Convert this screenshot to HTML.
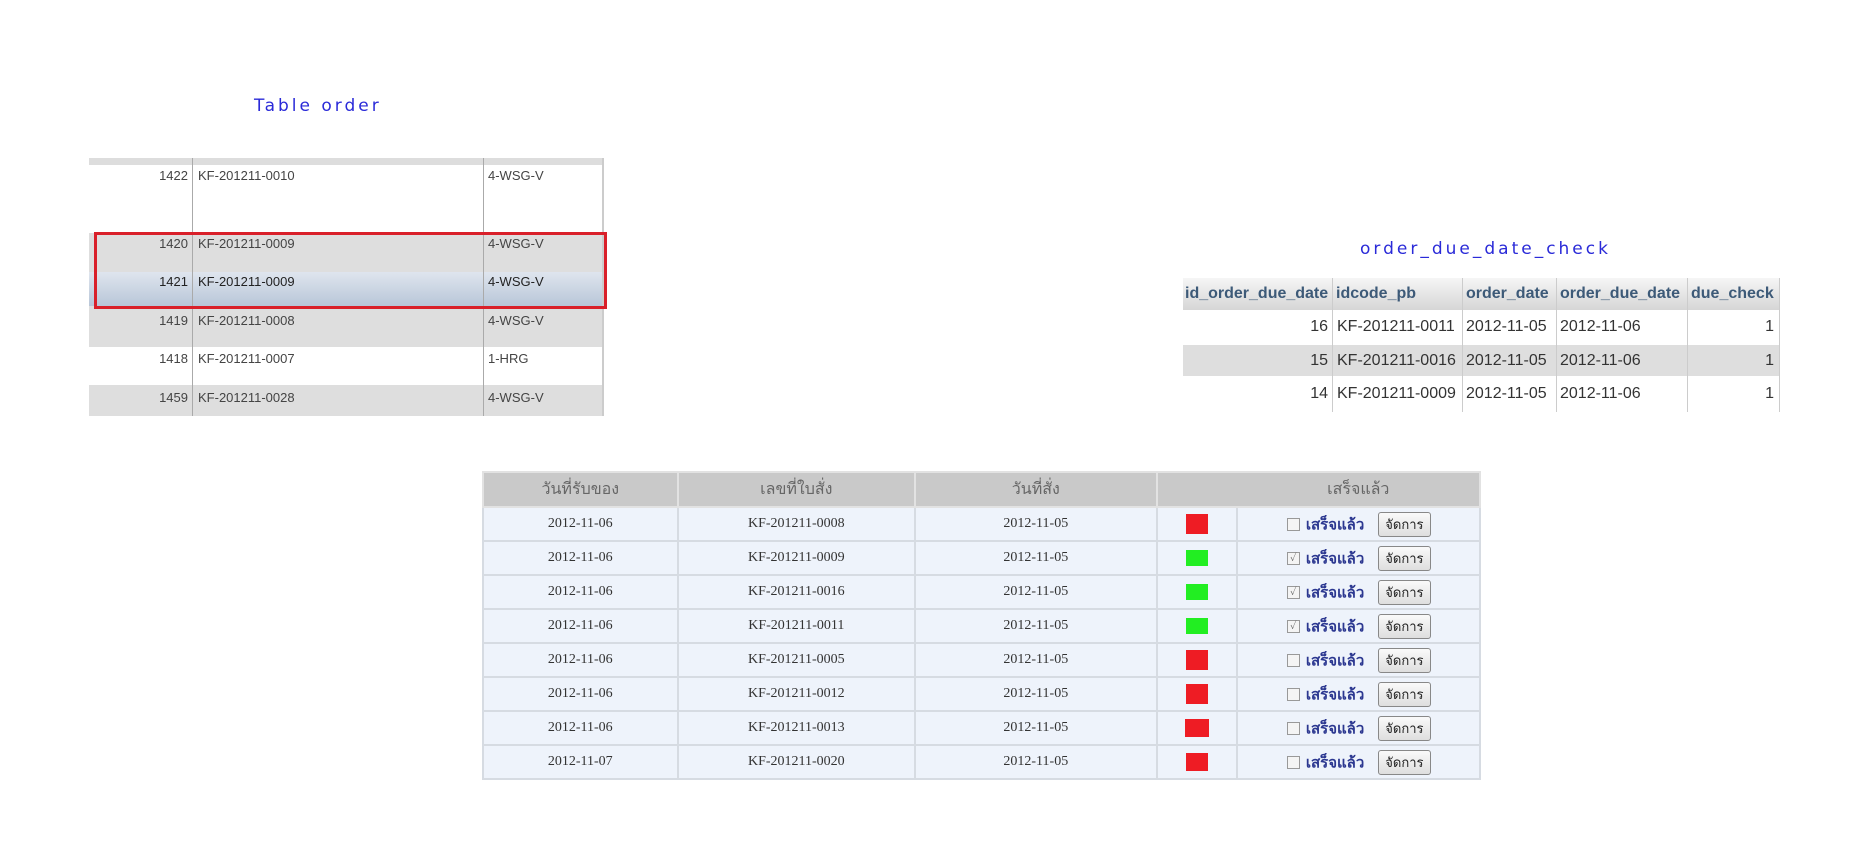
<!DOCTYPE html>
<html><head><meta charset="utf-8"><style>
body{margin:0;width:1854px;height:859px;background:#fff;position:relative;overflow:hidden;font-family:"Liberation Sans",Arial,sans-serif}
.abs{position:absolute}
.title{color:#2a2ad8;font-size:17px;letter-spacing:3px;font-family:"DejaVu Sans","Liberation Sans",sans-serif}
.lt div{position:absolute;font-size:13px;color:#444}
.rt{position:absolute;font-size:16px;color:#333}
.bt{position:absolute;border-collapse:collapse;font-family:"Liberation Serif","Noto Serif CJK SC",serif;font-size:14px;color:#333}
.bt td,.bt th{border:2px solid #d6dbe2;text-align:center;padding:0;height:32px}
.bt th{background:#c9c9c9;color:#666;font-weight:normal;font-size:16px;height:33px;border-color:#e2e2e2}
.bt td{background:#eef3fb}
.sq{display:inline-block;width:22px;height:20px;vertical-align:middle}
.cb{display:inline-block;width:11px;height:11px;border:1px solid #999;background:#f4f4f4;vertical-align:middle;font-size:10px;line-height:11px;color:#555;margin-right:6px}
.dn{color:#2b3790;font-weight:bold;font-family:"Liberation Sans","Noto Sans CJK SC",sans-serif;font-size:15px;vertical-align:middle}
.btn{display:inline-block;border:1px solid #888;border-radius:3px;background:linear-gradient(#fafafa,#dedede);font-family:"Liberation Sans","Noto Sans CJK SC",sans-serif;font-size:13px;padding:1px 6px;margin-left:14px;vertical-align:middle;color:#222}
</style></head><body>

<div class="abs title" style="left:254px;top:96px">Table order</div>

<div class="abs" style="left:89px;top:158px;width:514px;height:7px;background:#ddd"></div>
<div class="abs" style="left:89px;top:233px;width:514px;height:39px;background:#dedede"></div>
<div class="abs" style="left:89px;top:272px;width:514px;height:34px;background:linear-gradient(#dfe5ee,#b8c6d8)"></div>
<div class="abs" style="left:89px;top:306px;width:514px;height:41px;background:#dedede"></div>
<div class="abs" style="left:89px;top:385px;width:514px;height:31px;background:#dedede"></div>
<div class="abs" style="left:192px;top:158px;width:1px;height:258px;background:#aaa"></div>
<div class="abs" style="left:483px;top:158px;width:1px;height:258px;background:#aaa"></div>
<div class="abs" style="left:602px;top:158px;width:2px;height:258px;background:#ccc"></div>
<div class="abs" style="left:94px;top:232px;width:507px;height:71px;border:3px solid #d9202a"></div>
<div class="lt">
<div style="left:150px;top:168px;width:38px;text-align:right">1422</div><div style="left:198px;top:168px">KF-201211-0010</div><div style="left:488px;top:168px">4-WSG-V</div>
<div style="left:150px;top:236px;width:38px;text-align:right">1420</div><div style="left:198px;top:236px">KF-201211-0009</div><div style="left:488px;top:236px">4-WSG-V</div>
<div style="left:150px;top:274px;width:38px;text-align:right;color:#222">1421</div><div style="left:198px;top:274px;color:#222">KF-201211-0009</div><div style="left:488px;top:274px;color:#222">4-WSG-V</div>
<div style="left:150px;top:313px;width:38px;text-align:right">1419</div><div style="left:198px;top:313px">KF-201211-0008</div><div style="left:488px;top:313px">4-WSG-V</div>
<div style="left:150px;top:351px;width:38px;text-align:right">1418</div><div style="left:198px;top:351px">KF-201211-0007</div><div style="left:488px;top:351px">1-HRG</div>
<div style="left:150px;top:390px;width:38px;text-align:right">1459</div><div style="left:198px;top:390px">KF-201211-0028</div><div style="left:488px;top:390px">4-WSG-V</div>
</div>

<div class="abs title" style="left:1360px;top:239px">order_due_date_check</div>

<div class="abs" style="left:1183px;top:278px;width:597px;height:32px;background:linear-gradient(#f6f6f6,#d6d6d6)"></div>
<div class="abs" style="left:1183px;top:345px;width:597px;height:31px;background:#dedede"></div>
<div class="abs" style="left:1332px;top:278px;width:1px;height:134px;background:#ccc"></div>
<div class="abs" style="left:1462px;top:278px;width:1px;height:134px;background:#ccc"></div>
<div class="abs" style="left:1556px;top:278px;width:1px;height:134px;background:#ccc"></div>
<div class="abs" style="left:1687px;top:278px;width:1px;height:134px;background:#ccc"></div>
<div class="abs" style="left:1779px;top:278px;width:1px;height:134px;background:#ccc"></div>
<div class="rt" style="left:1185px;top:285px;font-weight:bold;color:#3d5a78">id_order_due_date</div>
<div class="rt" style="left:1336px;top:285px;font-weight:bold;color:#3d5a78">idcode_pb</div>
<div class="rt" style="left:1466px;top:285px;font-weight:bold;color:#3d5a78">order_date</div>
<div class="rt" style="left:1560px;top:285px;font-weight:bold;color:#3d5a78">order_due_date</div>
<div class="rt" style="left:1691px;top:285px;font-weight:bold;color:#3d5a78">due_check</div>
<div class="rt" style="left:1280px;top:318px;width:48px;text-align:right">16</div><div class="rt" style="left:1337px;top:318px">KF-201211-0011</div><div class="rt" style="left:1466px;top:318px">2012-11-05</div><div class="rt" style="left:1560px;top:318px">2012-11-06</div><div class="rt" style="left:1740px;top:318px;width:34px;text-align:right">1</div>
<div class="rt" style="left:1280px;top:352px;width:48px;text-align:right">15</div><div class="rt" style="left:1337px;top:352px">KF-201211-0016</div><div class="rt" style="left:1466px;top:352px">2012-11-05</div><div class="rt" style="left:1560px;top:352px">2012-11-06</div><div class="rt" style="left:1740px;top:352px;width:34px;text-align:right">1</div>
<div class="rt" style="left:1280px;top:385px;width:48px;text-align:right">14</div><div class="rt" style="left:1337px;top:385px">KF-201211-0009</div><div class="rt" style="left:1466px;top:385px">2012-11-05</div><div class="rt" style="left:1560px;top:385px">2012-11-06</div><div class="rt" style="left:1740px;top:385px;width:34px;text-align:right">1</div>

<table class="bt" style="left:482px;top:471px;width:999px">
<colgroup><col style="width:195px"><col style="width:238px"><col style="width:242px"><col style="width:81px"><col style="width:243px"></colgroup>
<tr><th>วันที่รับของ</th><th>เลขที่ใบสั่ง</th><th>วันที่สั่ง</th><th colspan="2" style="padding-left:80px">เสร็จแล้ว</th></tr>
<tr><td>2012-11-06</td><td>KF-201211-0008</td><td>2012-11-05</td><td><span class="sq" style="background:#ee1c24"></span></td><td><span class="cb"></span><span class="dn">เสร็จแล้ว</span><span class="btn">จัดการ</span></td></tr>
<tr><td>2012-11-06</td><td>KF-201211-0009</td><td>2012-11-05</td><td><span class="sq" style="background:#22ee22;height:16px"></span></td><td><span class="cb">✓</span><span class="dn">เสร็จแล้ว</span><span class="btn">จัดการ</span></td></tr>
<tr><td>2012-11-06</td><td>KF-201211-0016</td><td>2012-11-05</td><td><span class="sq" style="background:#22ee22;height:16px"></span></td><td><span class="cb">✓</span><span class="dn">เสร็จแล้ว</span><span class="btn">จัดการ</span></td></tr>
<tr><td>2012-11-06</td><td>KF-201211-0011</td><td>2012-11-05</td><td><span class="sq" style="background:#22ee22;height:16px"></span></td><td><span class="cb">✓</span><span class="dn">เสร็จแล้ว</span><span class="btn">จัดการ</span></td></tr>
<tr><td>2012-11-06</td><td>KF-201211-0005</td><td>2012-11-05</td><td><span class="sq" style="background:#ee1c24"></span></td><td><span class="cb"></span><span class="dn">เสร็จแล้ว</span><span class="btn">จัดการ</span></td></tr>
<tr><td>2012-11-06</td><td>KF-201211-0012</td><td>2012-11-05</td><td><span class="sq" style="background:#ee1c24"></span></td><td><span class="cb"></span><span class="dn">เสร็จแล้ว</span><span class="btn">จัดการ</span></td></tr>
<tr><td>2012-11-06</td><td>KF-201211-0013</td><td>2012-11-05</td><td><span class="sq" style="background:#ee1c24;width:24px;height:18px"></span></td><td><span class="cb"></span><span class="dn">เสร็จแล้ว</span><span class="btn">จัดการ</span></td></tr>
<tr><td>2012-11-07</td><td>KF-201211-0020</td><td>2012-11-05</td><td><span class="sq" style="background:#ee1c24;height:18px"></span></td><td><span class="cb"></span><span class="dn">เสร็จแล้ว</span><span class="btn">จัดการ</span></td></tr>
</table>
</body></html>
